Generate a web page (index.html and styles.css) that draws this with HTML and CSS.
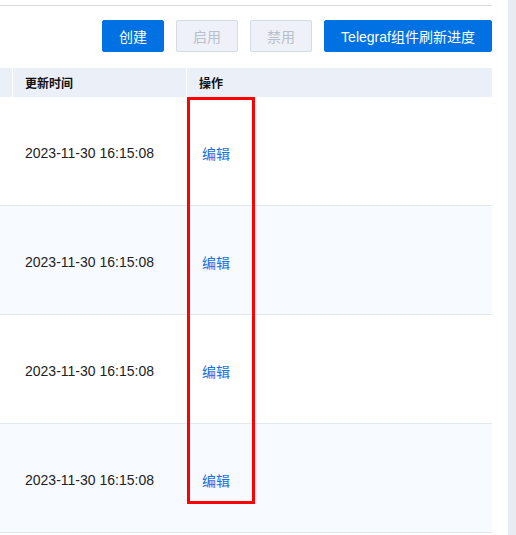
FILE: index.html
```html
<!DOCTYPE html>
<html lang="zh-CN">
<head>
<meta charset="utf-8">
<link rel="stylesheet" href="styles.css">
</head>
<body>
<div class="page">
  <div class="main">
    <div class="topline"></div>
    <div class="toolbar">
      <button class="btn btn-primary">创建</button>
      <button class="btn btn-disabled">启用</button>
      <button class="btn btn-disabled">禁用</button>
      <button class="btn btn-primary btn-wide">Telegraf组件刷新进度</button>
    </div>
    <div class="table">
      <div class="row head">
        <div class="cell c0"></div>
        <div class="cell c1">更新时间</div>
        <div class="cell c2">操作</div>
      </div>
      <div class="row">
        <div class="cell c0"></div>
        <div class="cell c1">2023-11-30 16:15:08</div>
        <div class="cell c2"><a class="link">编辑</a></div>
      </div>
      <div class="row alt">
        <div class="cell c0"></div>
        <div class="cell c1">2023-11-30 16:15:08</div>
        <div class="cell c2"><a class="link">编辑</a></div>
      </div>
      <div class="row">
        <div class="cell c0"></div>
        <div class="cell c1">2023-11-30 16:15:08</div>
        <div class="cell c2"><a class="link">编辑</a></div>
      </div>
      <div class="row alt">
        <div class="cell c0"></div>
        <div class="cell c1">2023-11-30 16:15:08</div>
        <div class="cell c2"><a class="link">编辑</a></div>
      </div>
      <div class="highlight"></div>
    </div>
  </div>
  <div class="scrollbar"></div>
</div>
</body>
</html>
```

FILE: styles.css
```css
html, body {
  margin: 0;
  padding: 0;
  background: #ffffff;
}
body {
  font-family: "Liberation Sans", "Noto Sans CJK SC", sans-serif;
  color: #222;
  width: 516px;
  height: 535px;
  overflow: hidden;
}
.page {
  display: flex;
  height: 535px;
}
.main {
  width: 492px;
  padding-top: 5px;
}
.topline {
  height: 1px;
  background: #d9dbe3;
}
.toolbar {
  display: flex;
  justify-content: flex-end;
  gap: 12px;
  margin-top: 14px;
}
.btn {
  height: 32px;
  width: 62px;
  border-radius: 2px;
  font-family: "Liberation Sans", "Noto Sans CJK SC", sans-serif;
  font-size: 14px;
  padding: 0;
  box-sizing: border-box;
}
.btn-primary {
  background: #0071e3;
  border: 1px solid #0071e3;
  color: #fff;
}
.btn-disabled {
  background: #eef1f8;
  border: 1px solid #d6dbe6;
  color: #b8bfcd;
}
.btn-wide {
  width: 168px;
}
.table {
  position: relative;
  margin-top: 16px;
}
.row {
  display: flex;
  height: 109px;
  border-bottom: 1px solid #e3e7f0;
  box-sizing: border-box;
  align-items: center;
  font-size: 14px;
  color: #222;
}
.row.alt {
  background: #f7faff;
}
.row.head {
  height: 29px;
  background: #ebf0f8;
  border-bottom: none;
  font-size: 12px;
  color: #111;
  font-weight: 600;
}
.cell {
  height: 100%;
  display: flex;
  align-items: center;
  box-sizing: border-box;
}
.c0 { width: 12px; }
.c1 { width: 174px; padding-left: 13px; }
.c2 { flex: 1; padding-left: 13px; }
.head .c1, .head .c2 {
  border-left: 1px solid #ffffff;
  padding-left: 12px;
}
.row:not(.head) .c1, .row:not(.head) .c2 {
  padding-top: 3px;
}
.link {
  color: #1a6fe0;
  padding-left: 3px;
}
.highlight {
  position: absolute;
  left: 187px;
  top: 29px;
  width: 68px;
  height: 407px;
  border: 3px solid #ff0000;
  box-sizing: border-box;
}
.scrollbar {
  margin-left: 16px;
  width: 8px;
  background: #e8ebf1;
}
```
